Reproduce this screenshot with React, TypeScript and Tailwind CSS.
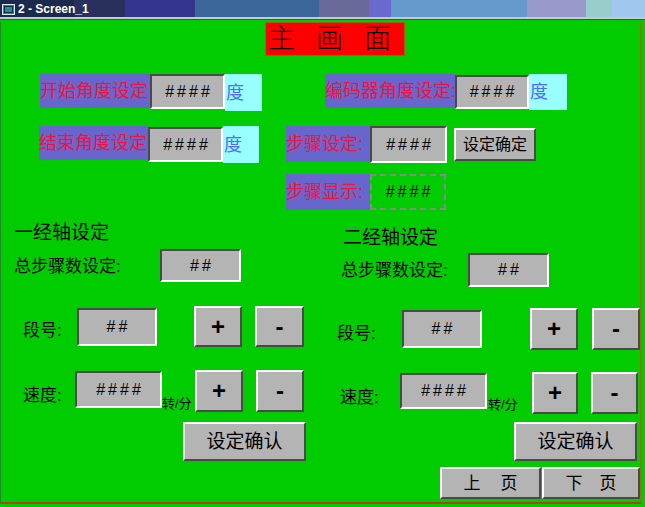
import type { ReactNode } from "react";

const sunken =
  "bg-[#b4b4b4] border-2 border-t-[#4a4a4a] border-l-[#4a4a4a] border-r-white border-b-white flex items-center justify-center text-[16px] leading-none tracking-[3px] pl-[3px] text-black shrink-0";
const raised =
  "bg-[#b4b4b4] border-2 border-t-white border-l-white border-r-[#4a4a4a] border-b-[#4a4a4a] flex items-center justify-center text-black leading-none shrink-0";
const purple =
  "bg-[#6666cc] text-[#f0143c] text-[18px] leading-none flex items-center whitespace-nowrap overflow-hidden shrink-0";
const cyan = "bg-[#99ffff] text-[#4f6bff] text-[18px] leading-none flex items-center pl-[1px] shrink-0";

function Field({ className, children }: { className: string; children: ReactNode }) {
  return <div className={`${sunken} ${className}`}>{children}</div>;
}

function Btn({ className, children }: { className: string; children: ReactNode }) {
  return <div className={`${raised} ${className}`}>{children}</div>;
}

// title bar colour blocks, left to right
const strip = [
  { w: "w-[74px]", c: "bg-[#1b2a4c]" },
  { w: "w-[51px]", c: "bg-[#29305e]" },
  { w: "w-[70px]", c: "bg-[#33358f]" },
  { w: "w-[124px]", c: "bg-[#3a6699]" },
  { w: "w-[50px]", c: "bg-[#6a6a9a]" },
  { w: "w-[22px]", c: "bg-[#6a6acc]" },
  { w: "w-[136px]", c: "bg-[#6699cc]" },
  { w: "w-[59px]", c: "bg-[#9999cc]" },
  { w: "w-[26px]", c: "bg-[#99cccc]" },
  { w: "w-[33px]", c: "bg-[#a0c8ee]" },
];

export default function App() {
  return (
    <div className="w-[645px] h-[507px] bg-[#00cc00] overflow-hidden font-['Liberation_Sans','Noto_Sans_CJK_SC',sans-serif]">
      {/* title bar */}
      <div className="relative h-[17px] flex">
        {strip.map((s, i) => (
          <div key={i} className={`${s.w} ${s.c} h-full`} />
        ))}
        <div className="absolute left-[2px] top-[3px] flex items-center gap-[3px]">
          <div className="w-[13px] h-[11px] border border-[#d8e8f0] bg-[#2a8a9a] p-[1px]">
            <div className="w-full h-full border border-[#0a3040]" />
          </div>
          <span className="text-white font-bold text-[12px] leading-none">2 - Screen_1</span>
        </div>
      </div>
      <div className="h-[2px] bg-[#c4c8d8]" />
      <div className="h-[1px] bg-[#4a5058]" />

      {/* screen frame */}
      <div className="w-[642px] h-[482px] border-l border-l-[#1f8a1f] border-r-2 border-r-[#8a7a10] border-b-2 border-b-[#b04020]">
        {/* heading */}
        <div className="mt-[2px] ml-[264px] w-[140px] h-[34px] bg-[#ff0000] border border-[#a06010] flex items-center pl-[2px] gap-[21px] text-[27px] font-light leading-none text-black">
          <span>主</span>
          <span>画</span>
          <span>面</span>
        </div>

        {/* row 1 */}
        <div className="mt-[18px] flex items-start">
          <div className={`${purple} ml-[39px] w-[110px] h-[34px]`}>开始角度设定</div>
          <Field className="w-[75px] h-[35px]">####</Field>
          <div className={`${cyan} w-[37px] h-[37px]`}>度</div>
          <div className={`${purple} ml-[63px] w-[130px] h-[34px]`}>编码器角度设定:</div>
          <Field className="w-[74px] h-[34px] mt-[1px]">####</Field>
          <div className={`${cyan} w-[38px] h-[36px]`}>度</div>
        </div>

        {/* row 2 */}
        <div className="mt-[15px] flex items-start">
          <div className={`${purple} ml-[38px] w-[109px] h-[34px]`}>结束角度设定</div>
          <Field className="w-[75px] h-[35px] mt-[1px]">####</Field>
          <div className={`${cyan} w-[36px] h-[37px]`}>度</div>
          <div className={`${purple} ml-[27px] w-[84px] h-[36px]`}>步骤设定:</div>
          <Field className="w-[77px] h-[37px]">####</Field>
          <Btn className="ml-[7px] mt-[2px] w-[82px] h-[33px] text-[16px]">设定确定</Btn>
        </div>

        {/* row 3 */}
        <div className="mt-[11px] flex items-start">
          <div className={`${purple} ml-[285px] w-[84px] h-[36px]`}>步骤显示:</div>
          <div className="w-[76px] h-[36px] border-2 border-dashed border-[#8a8a8a] flex items-center justify-center text-[16px] leading-none tracking-[3px] pl-[3px] text-black">
            ####
          </div>
        </div>

        {/* axis sections */}
        <div className="mt-[10px] flex text-black">
          {/* axis 1 */}
          <div className="w-[320px] shrink-0">
            <div className="ml-[13px] mt-[3px] h-[20px] text-[19px] leading-[20px]">一经轴设定</div>
            <div className="mt-[6px] h-[33px] flex items-center">
              <div className="ml-[13px] w-[146px] text-[17px] leading-none pt-[1px]">总步骤数设定:</div>
              <Field className="w-[81px] h-[33px]">##</Field>
            </div>
            <div className="mt-[24px] h-[41px] flex items-center">
              <div className="ml-[22px] w-[54px] text-[17px] leading-none mt-[8px]">段号:</div>
              <Field className="w-[80px] h-[38px]">##</Field>
              <Btn className="ml-[37px] w-[48px] h-[41px] text-[24px] font-bold">+</Btn>
              <Btn className="ml-[13px] w-[49px] h-[41px] text-[24px] font-bold">-</Btn>
            </div>
            <div className="mt-[23px] h-[42px] flex items-start">
              <div className="ml-[22px] w-[52px] text-[17px] leading-none mt-[17px]">速度:</div>
              <Field className="w-[87px] h-[37px] mt-[1px]">####</Field>
              <div className="w-[32px] text-[13px] leading-none mt-[27px] whitespace-nowrap">转/分</div>
              <Btn className="ml-[1px] w-[48px] h-[42px] text-[24px] font-bold">+</Btn>
              <Btn className="ml-[13px] w-[48px] h-[42px] text-[24px] font-bold">-</Btn>
            </div>
            <Btn className="mt-[10px] ml-[182px] w-[123px] h-[39px] text-[19px]">设定确认</Btn>
          </div>

          {/* axis 2 */}
          <div className="flex-1">
            <div className="ml-[22px] mt-[8px] h-[20px] text-[19px] leading-[20px]">二经轴设定</div>
            <div className="mt-[5px] h-[34px] flex items-center">
              <div className="ml-[20px] w-[127px] text-[17px] leading-none pt-[1px]">总步骤数设定:</div>
              <Field className="w-[81px] h-[34px]">##</Field>
            </div>
            <div className="mt-[21px] h-[42px] flex items-center">
              <div className="ml-[16px] w-[65px] text-[17px] leading-none mt-[8px]">段号:</div>
              <Field className="w-[80px] h-[38px]">##</Field>
              <Btn className="ml-[48px] w-[48px] h-[42px] text-[24px] font-bold">+</Btn>
              <Btn className="ml-[14px] w-[48px] h-[42px] text-[24px] font-bold">-</Btn>
            </div>
            <div className="mt-[22px] h-[42px] flex items-start">
              <div className="ml-[19px] w-[60px] text-[17px] leading-none mt-[17px]">速度:</div>
              <Field className="w-[87px] h-[36px] mt-[1px]">####</Field>
              <div className="ml-[1px] w-[44px] text-[13px] leading-none mt-[26px] whitespace-nowrap">转/分</div>
              <Btn className="w-[46px] h-[42px] text-[24px] font-bold">+</Btn>
              <Btn className="ml-[13px] w-[47px] h-[42px] text-[24px] font-bold">-</Btn>
            </div>
            <Btn className="mt-[8px] ml-[193px] w-[123px] h-[39px] text-[19px]">设定确认</Btn>
            <div className="mt-[6px] ml-[119px] flex">
              <Btn className="w-[101px] h-[32px] text-[17px] gap-[20px]">
                <span>上</span>
                <span>页</span>
              </Btn>
              <Btn className="ml-[1px] w-[98px] h-[32px] text-[17px] gap-[17px]">
                <span>下</span>
                <span>页</span>
              </Btn>
            </div>
          </div>
        </div>
      </div>
    </div>
  );
}
